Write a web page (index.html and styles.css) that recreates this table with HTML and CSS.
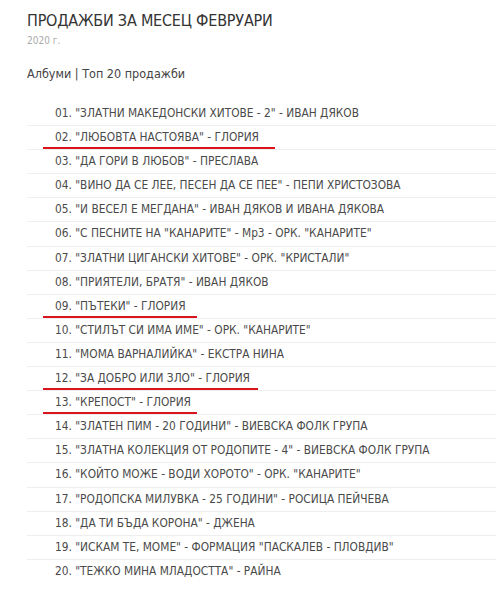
FILE: index.html
```html
<!DOCTYPE html>
<html>
  <head>
    <meta charset="UTF-8" />
    <title>Продажби за месец февруари</title>
    <link rel="stylesheet" href="styles.css">
  </head>
  <body>
    <div id="page">
      <h1 class="title">ПРОДАЖБИ ЗА МЕСЕЦ ФЕВРУАРИ</h1>
      <p class="year">2020 г.</p>
      <p class="crumbs">Албуми | Топ 20 продажби</p>
      <ul id="chart"></ul>
    </div>
    <script>
      const chart = document.getElementById("chart");

      // mark = width of the red hand-drawn underline
      const albums = [
        { text: '"ЗЛАТНИ МАКЕДОНСКИ ХИТОВЕ - 2" - ИВАН ДЯКОВ' },
        { text: '"ЛЮБОВТА НАСТОЯВА" - ГЛОРИЯ', mark: 232 },
        { text: '"ДА ГОРИ В ЛЮБОВ" - ПРЕСЛАВА' },
        { text: '"ВИНО ДА СЕ ЛЕЕ, ПЕСЕН ДА СЕ ПЕЕ" - ПЕПИ ХРИСТОЗОВА' },
        { text: '"И ВЕСЕЛ Е МЕГДАНА" - ИВАН ДЯКОВ И ИВАНА ДЯКОВА' },
        { text: '"С ПЕСНИТЕ НА "КАНАРИТЕ" - Mp3 - ОРК. "КАНАРИТЕ"' },
        { text: '"ЗЛАТНИ ЦИГАНСКИ ХИТОВЕ" - ОРК. "КРИСТАЛИ"' },
        { text: '"ПРИЯТЕЛИ, БРАТЯ" - ИВАН ДЯКОВ' },
        { text: '"ПЪТЕКИ" - ГЛОРИЯ', mark: 154 },
        { text: '"СТИЛЪТ СИ ИМА ИМЕ" - ОРК. "КАНАРИТЕ"' },
        { text: '"МОМА ВАРНАЛИЙКА" - ЕКСТРА НИНА' },
        { text: '"ЗА ДОБРО ИЛИ ЗЛО" - ГЛОРИЯ', mark: 215 },
        { text: '"КРЕПОСТ" - ГЛОРИЯ', mark: 154 },
        { text: '"ЗЛАТЕН ПИМ - 20 ГОДИНИ" - ВИЕВСКА ФОЛК ГРУПА' },
        { text: '"ЗЛАТНА КОЛЕКЦИЯ ОТ РОДОПИТЕ - 4" - ВИЕВСКА ФОЛК ГРУПА' },
        { text: '"КОЙТО МОЖЕ - ВОДИ ХОРОТО" - ОРК. "КАНАРИТЕ"' },
        { text: '"РОДОПСКА МИЛУВКА - 25 ГОДИНИ" - РОСИЦА ПЕЙЧЕВА' },
        { text: '"ДА ТИ БЪДА КОРОНА" - ДЖЕНА' },
        { text: '"ИСКАМ ТЕ, МОМЕ" - ФОРМАЦИЯ "ПАСКАЛЕВ - ПЛОВДИВ"' },
        { text: '"ТЕЖКО МИНА МЛАДОСТТА" - РАЙНА' },
      ];

      albums.forEach((album, i) => {
        const li = document.createElement("li");
        const num = String(i + 1).padStart(2, "0");
        li.textContent = `${num}. ${album.text}`;
        if (album.mark) {
          const mark = document.createElement("span");
          mark.className = "mark";
          mark.style.width = album.mark + "px";
          li.appendChild(mark);
        }
        chart.appendChild(li);
      });
    </script>
  </body>
</html>
```

FILE: styles.css
```css
* {
  box-sizing: border-box;
  margin: 0;
  padding: 0;
}

body {
  font-family: "DejaVu Sans Condensed", "DejaVu Sans", sans-serif;
  color: #444;
  background-color: #fff;
}

#page {
  padding: 9px 0 0 27px;
}

.title {
  font-size: 16px;
  font-weight: normal;
  color: #333;
  line-height: 24px;
  letter-spacing: -0.2px;
}

.year {
  font-size: 10px;
  color: #aaa;
  line-height: 16px;
}

.crumbs {
  font-size: 12.5px;
  color: #444;
  margin-top: 16px;
  line-height: 18px;
}

#chart {
  list-style: none;
  margin-top: 19px;
}

#chart li {
  position: relative;
  font-size: 11.8px;
  line-height: 23.1px;
  padding-left: 28px;
  border-bottom: 1px solid #eee;
  color: #4a4a4a;
}

#chart li:last-child {
  border-bottom: none;
}

.mark {
  position: absolute;
  left: 16px;
  bottom: 0;
  height: 2px;
  background-color: #d9141b;
}
```
